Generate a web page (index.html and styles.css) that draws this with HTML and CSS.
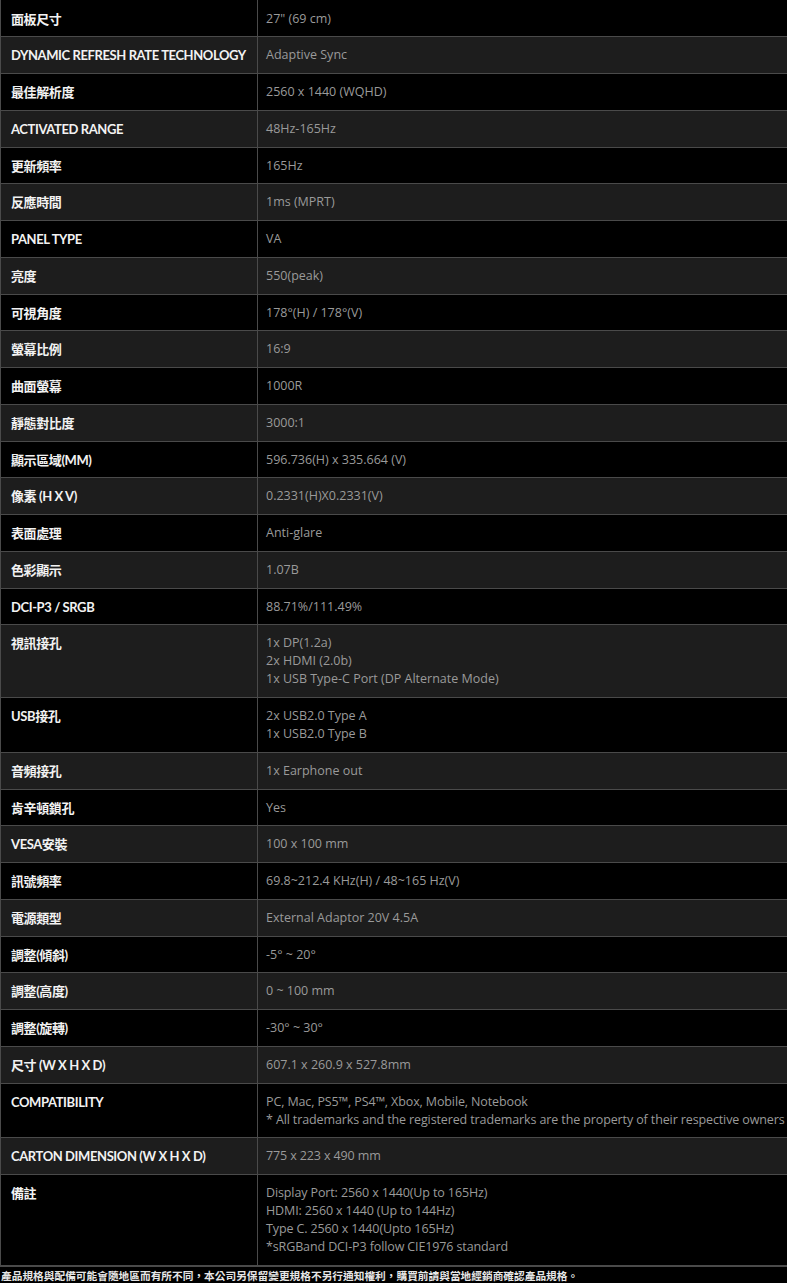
FILE: index.html
```html
<!DOCTYPE html>
<html lang="zh-Hant">
<head>
<meta charset="utf-8">
<title>規格</title>
<link rel="stylesheet" href="styles.css">
</head>
<body>
<table class="spec">
  <colgroup><col class="c-label"><col class="c-value"></colgroup>
  <tbody>
    <tr class="dark"><th>面板尺寸</th><td>27" (69 cm)</td></tr>
    <tr class="grey"><th>DYNAMIC REFRESH RATE TECHNOLOGY</th><td>Adaptive Sync</td></tr>
    <tr class="dark"><th>最佳解析度</th><td>2560 x 1440 (WQHD)</td></tr>
    <tr class="grey"><th>ACTIVATED RANGE</th><td>48Hz-165Hz</td></tr>
    <tr class="dark"><th>更新頻率</th><td>165Hz</td></tr>
    <tr class="grey"><th>反應時間</th><td>1ms (MPRT)</td></tr>
    <tr class="dark"><th>PANEL TYPE</th><td>VA</td></tr>
    <tr class="grey"><th>亮度</th><td>550(peak)</td></tr>
    <tr class="dark"><th>可視角度</th><td>178°(H) / 178°(V)</td></tr>
    <tr class="grey"><th>螢幕比例</th><td>16:9</td></tr>
    <tr class="dark"><th>曲面螢幕</th><td>1000R</td></tr>
    <tr class="grey"><th>靜態對比度</th><td>3000:1</td></tr>
    <tr class="dark"><th>顯示區域(MM)</th><td>596.736(H) x 335.664 (V)</td></tr>
    <tr class="grey"><th>像素 (H X V)</th><td>0.2331(H)X0.2331(V)</td></tr>
    <tr class="dark"><th>表面處理</th><td>Anti-glare</td></tr>
    <tr class="grey"><th>色彩顯示</th><td>1.07B</td></tr>
    <tr class="dark"><th>DCI-P3 / SRGB</th><td>88.71%/111.49%</td></tr>
    <tr class="grey"><th>視訊接孔</th><td>1x DP(1.2a)<br>2x HDMI (2.0b)<br>1x USB Type-C Port (DP Alternate Mode)</td></tr>
    <tr class="dark"><th>USB接孔</th><td>2x USB2.0 Type A<br>1x USB2.0 Type B</td></tr>
    <tr class="grey"><th>音頻接孔</th><td>1x Earphone out</td></tr>
    <tr class="dark"><th>肯辛頓鎖孔</th><td>Yes</td></tr>
    <tr class="grey"><th>VESA安裝</th><td>100 x 100 mm</td></tr>
    <tr class="dark"><th>訊號頻率</th><td>69.8~212.4 KHz(H) / 48~165 Hz(V)</td></tr>
    <tr class="grey"><th>電源類型</th><td>External Adaptor 20V 4.5A</td></tr>
    <tr class="dark"><th>調整(傾斜)</th><td>-5° ~ 20°</td></tr>
    <tr class="grey"><th>調整(高度)</th><td>0 ~ 100 mm</td></tr>
    <tr class="dark"><th>調整(旋轉)</th><td>-30° ~ 30°</td></tr>
    <tr class="grey"><th>尺寸 (W X H X D)</th><td>607.1 x 260.9 x 527.8mm</td></tr>
    <tr class="dark narrow"><th>COMPATIBILITY</th><td>PC, Mac, PS5™, PS4™, Xbox, Mobile, Notebook<br>* All trademarks and the registered trademarks are the property of their respective owners</td></tr>
    <tr class="grey narrow"><th>CARTON DIMENSION (W X H X D)</th><td>775 x 223 x 490 mm</td></tr>
    <tr class="dark narrow"><th>備註</th><td>Display Port: 2560 x 1440(Up to 165Hz)<br>HDMI: 2560 x 1440 (Up to 144Hz)<br>Type C. 2560 x 1440(Upto 165Hz)<br>*sRGBand DCI-P3 follow CIE1976 standard</td></tr>
  </tbody>
</table>
<p class="note">產品規格與配備可能會隨地區而有所不同，本公司另保留變更規格不另行通知權利，購買前請與當地經銷商確認產品規格。</p>
</body>
</html>
```

FILE: styles.css
```css
html, body {
  margin: 0;
  padding: 0;
  background: #000;
}

.spec {
  width: 787px;
  table-layout: fixed;
  border-collapse: collapse;
  font-family: Lato, "Noto Sans CJK TC", sans-serif;
}

.c-label { width: 257px; }
.c-value { width: 530px; }

.spec th,
.spec td {
  border: 1px solid #4a4a4a;
  padding: 8.875px 8px 8.875px 9px;
  line-height: 18px;
  vertical-align: top;
  text-align: left;
  white-space: nowrap;
}

.spec tr:first-child th,
.spec tr:first-child td {
  border-top: 0;
  padding-top: 9.5px;
}

.spec th {
  color: #f2f2f2;
  font-weight: bold;
  font-size: 13px;
  letter-spacing: -0.4px;
  padding-left: 10px;
}

.spec td {
  color: #9a9a9a;
  font-family: "Open Sans", "Noto Sans CJK TC", sans-serif;
  font-size: 12.5px;
  padding-left: 8px;
}

.grey th,
.grey td {
  background: #1d1d1d;
}

.dark th,
.dark td {
  background: #000;
}

.narrow td {
  letter-spacing: -0.12px;
}

.note {
  margin: 0;
  border-top: 1px solid #4a4a4a;
  padding: 1px 0 0 1px;
  font-family: "Noto Sans CJK TC", sans-serif;
  font-weight: bold;
  font-size: 10.7px;
  line-height: 16px;
  color: #e6e6e6;
  white-space: nowrap;
}
```
